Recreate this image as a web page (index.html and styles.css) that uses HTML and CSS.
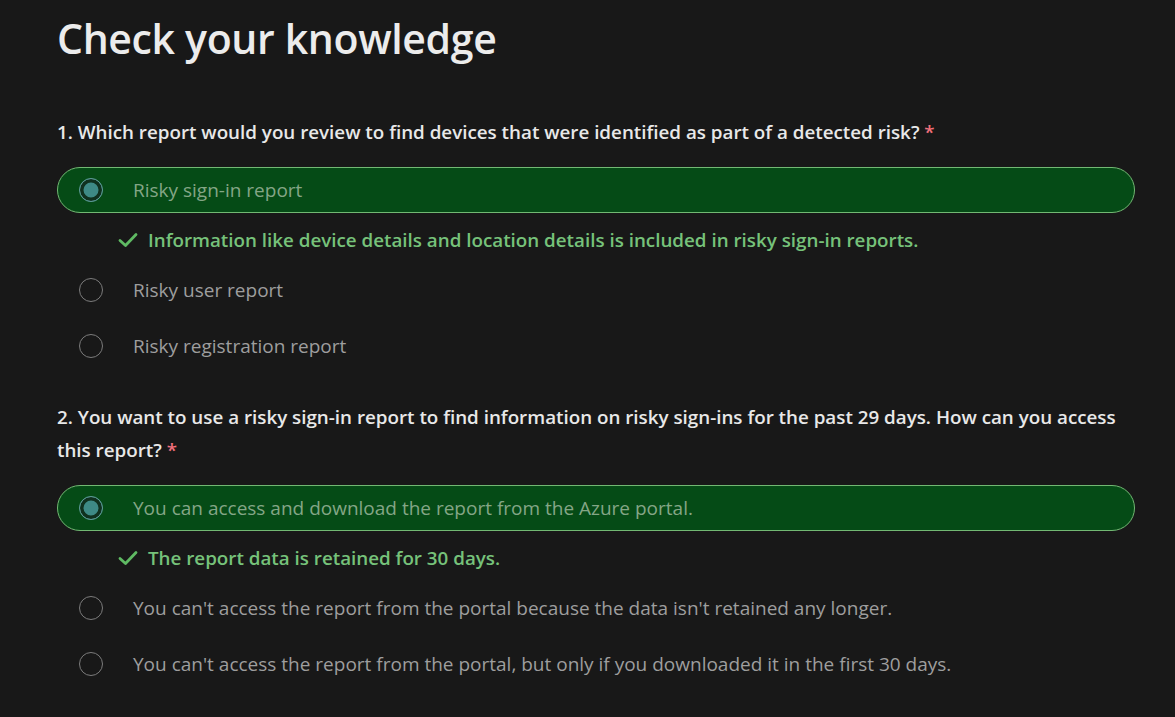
FILE: index.html
```html
<!DOCTYPE html>
<html lang="en">
<head>
<meta charset="utf-8">
<title>Check your knowledge</title>
<link rel="stylesheet" href="styles.css">
</head>
<body>
<main class="page">
  <h1 class="title">Check your knowledge</h1>

  <section class="question">
    <p class="q-title">1. Which report would you review to find devices that were identified as part of a detected risk? <span class="req">*</span></p>
    <ul class="options">
      <li class="option selected"><span class="radio"></span><span class="label">Risky sign-in report</span></li>
      <li class="feedback"><svg class="check" viewBox="0 0 20 16" width="20" height="16" aria-hidden="true"><path d="M2 8.5 L7.5 13.5 L18 2.5" fill="none" stroke="currentColor" stroke-width="2.8" stroke-linecap="round" stroke-linejoin="round"/></svg><span>Information like device details and location details is included in risky sign-in reports.</span></li>
      <li class="option"><span class="radio"></span><span class="label">Risky user report</span></li>
      <li class="option"><span class="radio"></span><span class="label">Risky registration report</span></li>
    </ul>
  </section>

  <section class="question">
    <p class="q-title">2. You want to use a risky sign-in report to find information on risky sign-ins for the past 29 days. How can you access this report?&nbsp;<span class="req">*</span></p>
    <ul class="options">
      <li class="option selected"><span class="radio"></span><span class="label">You can access and download the report from the Azure portal.</span></li>
      <li class="feedback"><svg class="check" viewBox="0 0 20 16" width="20" height="16" aria-hidden="true"><path d="M2 8.5 L7.5 13.5 L18 2.5" fill="none" stroke="currentColor" stroke-width="2.8" stroke-linecap="round" stroke-linejoin="round"/></svg><span>The report data is retained for 30 days.</span></li>
      <li class="option"><span class="radio"></span><span class="label">You can't access the report from the portal because the data isn't retained any longer.</span></li>
      <li class="option"><span class="radio"></span><span class="label">You can't access the report from the portal, but only if you downloaded it in the first 30 days.</span></li>
    </ul>
  </section>
</main>
</body>
</html>
```

FILE: styles.css
```css
* { box-sizing: border-box; }

html, body {
  margin: 0;
  padding: 0;
  background: #181818;
}

body {
  font-family: "Open Sans", "Noto Sans", "Liberation Sans", sans-serif;
  color: #e6e6e6;
}

.page {
  width: 1135px;
  padding: 10px 0 0 57px;
}

.title {
  margin: 0;
  font-size: 41px;
  line-height: 56px;
  font-weight: 600;
  color: #ececec;
  letter-spacing: -0.35px;
}

.question {
  margin-top: 32px;
}

.title + .question {
  margin-top: 50px;
}

.q-title {
  margin: 0 0 18px;
  font-size: 18.8px;
  line-height: 33px;
  font-weight: 600;
  color: #e8e8e8;
}

.req {
  color: #f1707b;
}

.options {
  list-style: none;
  margin: 0;
  padding: 0;
  display: flex;
  flex-direction: column;
  gap: 10px;
}

.option {
  display: flex;
  align-items: center;
  height: 46px;
  padding-left: 21px;
  border: 1px solid transparent;
  border-radius: 23px;
  font-size: 19px;
  color: #9e9e9e;
}

.option.selected {
  background: #054b16;
  border-color: #72b873;
  color: #84a686;
}

.radio {
  flex: none;
  width: 24px;
  height: 24px;
  border-radius: 50%;
  border: 1.5px solid #7c7c7c;
  margin-right: 30px;
}

.selected .radio {
  border: 1.5px solid #5f9a97;
  background: #3e8a86;
  box-shadow: inset 0 0 0 3.5px #10311f;
}

.feedback {
  display: flex;
  align-items: center;
  height: 34px;
  padding-left: 61px;
  font-size: 18.8px;
  font-weight: 600;
  color: #76c27a;
}

.check {
  flex: none;
  color: #5fba63;
  margin-right: 10px;
}
```
